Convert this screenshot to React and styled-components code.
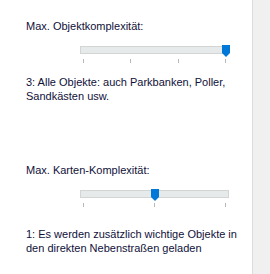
import React from "react";
import styled, { createGlobalStyle } from "styled-components";

const GlobalStyle = createGlobalStyle`
  html, body {
    margin: 0;
    padding: 0;
    background: #ffffff;
  }
  body {
    font-family: "Liberation Sans", Arial, sans-serif;
    font-size: 11px;
    color: #10103a;
  }
`;

const Page = styled.div`
  display: flex;
  width: 270px;
  height: 274px;
  overflow: hidden;
`;

const Content = styled.div`
  width: 252px;
  padding: 19px 12px 0 26px;
  box-sizing: border-box;
  background: #ffffff;
`;

const SideBar = styled.div`
  flex: 1;
  background: #f0f0f0;
  border-left: 1px solid #dcdcdc;
`;

const Section = styled.div`
  display: flex;
  flex-direction: column;
  margin-bottom: ${(p) => p.$gap || 0}px;
`;

const Label = styled.div`
  line-height: 15px;
`;

const SliderBox = styled.div`
  position: relative;
  margin: 11px 0 0 54px;
  width: 149px;
  height: 18px;
`;

const Track = styled.div`
  height: 8px;
  margin-top: 1px;
  background: #e6eaea;
  border: 1px solid #d3d5d5;
  box-sizing: border-box;
`;

const Ticks = styled.div`
  display: flex;
  justify-content: space-between;
  padding: 0 3px 0 3px;
  margin-top: 5px;
`;

const Tick = styled.span`
  width: 1px;
  height: 4px;
  background: #b8b8b8;
`;

const Thumb = styled.svg`
  position: absolute;
  top: 0;
  width: 8px;
  height: 12px;
`;

const Description = styled.div`
  line-height: 14px;
  margin-top: ${(p) => p.$offset}px;
`;

function Slider({ max, value }) {
  const span = 149 - 6;
  const center = 3 + (span * value) / max;
  return (
    <SliderBox>
      <Track />
      <Ticks>
        {Array.from({ length: max + 1 }).map((_, i) => (
          <Tick key={i} />
        ))}
      </Ticks>
      <Thumb viewBox="0 0 8 12" style={{ left: center - 4 }}>
        <path d="M0 0H8V8L4 12L0 8Z" fill="#0078d7" />
      </Thumb>
    </SliderBox>
  );
}

export default function App() {
  return (
    <>
      <GlobalStyle />
      <Page>
        <Content>
          <Section $gap={60}>
            <Label>Max. Objektkomplexität:</Label>
            <Slider max={3} value={3} />
            <Description $offset={12}>
              3: Alle Objekte: auch Parkbanken, Poller, Sandkästen usw.
            </Description>
          </Section>
          <Section>
            <Label>Max. Karten-Komplexität:</Label>
            <Slider max={2} value={1} />
            <Description $offset={20}>
              1: Es werden zusätzlich wichtige Objekte in den direkten
              Nebenstraßen geladen
            </Description>
          </Section>
        </Content>
        <SideBar />
      </Page>
    </>
  );
}
